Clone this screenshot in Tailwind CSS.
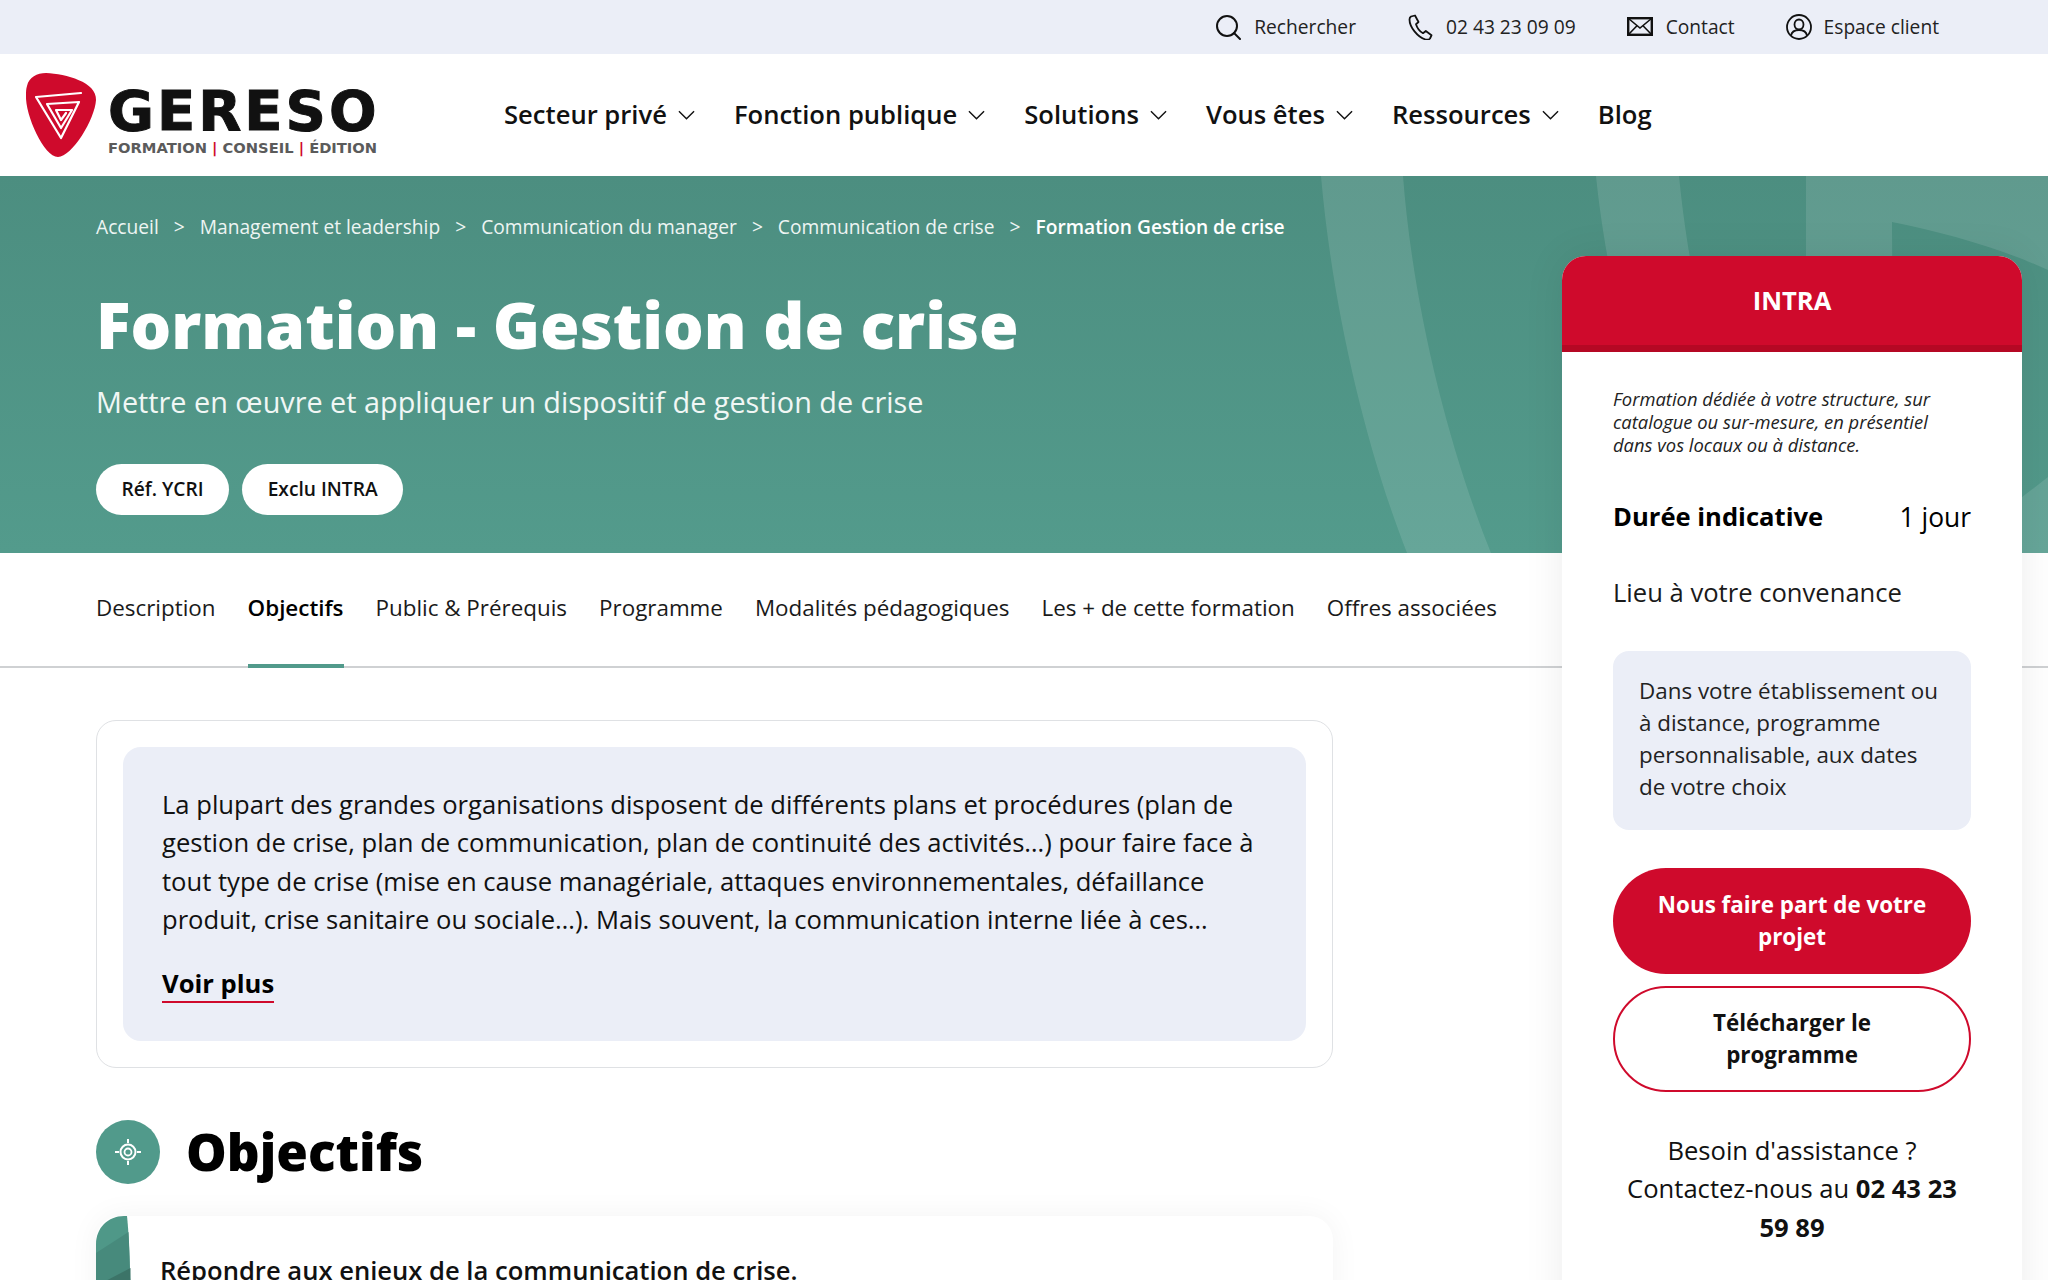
<!DOCTYPE html>
<html lang="fr">
<head>
  <meta charset="UTF-8" />
  <meta name="viewport" content="width=device-width, initial-scale=1.0" />
  <title>Formation - Gestion de crise | GERESO</title>
  <script src="https://cdn.jsdelivr.net/npm/@tailwindcss/browser@4"></script>
</head>
<body class="bg-white text-black font-['Open_Sans',sans-serif]">
  <div class="relative h-[1280px] overflow-hidden">

    <!-- top bar -->
    <div class="h-[54px] bg-[#ebeef7] flex items-center justify-end pr-[109px] gap-[51px] text-[19.2px] text-[#222]">
      <a class="flex items-center gap-[13px] mr-[1px]">
        <svg class="w-[26px] h-[26px]" viewBox="0 0 26 26" fill="none" stroke="#111" stroke-width="2" stroke-linecap="round"><circle cx="12" cy="12" r="10"/><path d="M19 19l6 6"/></svg>
        Rechercher
      </a>
      <a class="flex items-center gap-[12px]">
        <svg class="w-[26px] h-[26px]" viewBox="0 0 26 26" fill="none" stroke="#111" stroke-width="1.8" stroke-linejoin="round"><path d="M3 2.5l4-1 3.500 6.500-2.500 2.200c1.200 4 3.500 7 7 9l2.800-2.200 5.700 4.300-1.500 3.200c-.8 1-2.500 1.500-4.500 1C9.500 23 1.500 13 1.500 5.500c0-1.200.6-2.400 1.500-3z"/></svg>
        02 43 23 09 09
      </a>
      <a class="flex items-center gap-[13px]">
        <svg class="w-[26px] h-[19px]" viewBox="0 0 26 19" fill="none" stroke="#111" stroke-width="2.400"><rect x="1.200" y="1.200" width="23.600" height="16.600"/><path d="M1.500 1.500L13 11 24.500 1.500M1.500 17.500l8.500-8.800M24.500 17.500L16 8.700" stroke-width="1.600"/></svg>
        Contact
      </a>
      <a class="flex items-center gap-[12px]">
        <svg class="w-[26px] h-[26px]" viewBox="0 0 26 26" fill="none" stroke="#111" stroke-width="1.800"><circle cx="13" cy="13" r="12"/><ellipse cx="13" cy="10.500" rx="4.500" ry="5"/><path d="M5 21.500c.8-4 3.500-5.500 8-5.500s7.200 1.500 8 5.500"/></svg>
        Espace client
      </a>
    </div>

    <!-- nav -->
    <div class="h-[122px] flex items-center">
      <a class="w-[504px] pl-[24px] flex items-center gap-[11px] shrink-0">
        <svg class="w-[73px] h-[84px] shrink-0" viewBox="0 0 73 84">
          <path fill="#cf0a2c" d="M3 13C5 4 13 0 22 0c20 1 51 9 50 27C71 46 48 84 34 84 20 84 1 42 2 22c0-3 0-6 1-9z"/>
          <path fill="none" stroke="#fff" stroke-width="2.200" stroke-linejoin="round" stroke-linecap="round" d="M57 20L12 24l25 41 18-36-32 2 14 24 11-18H32l5 10 5-7"/>
        </svg>
        <div class="w-[270px] pt-[12px]">
          <div class="font-['DejaVu_Sans',sans-serif] font-bold text-[56px] leading-[51px] tracking-[3px] [-webkit-text-stroke:1px_#111] text-[#111] whitespace-nowrap">GERESO</div>
          <div class="mt-[3px] font-['DejaVu_Sans',sans-serif] font-bold text-[14.7px] leading-[18px] text-[#5b5b5b] whitespace-nowrap">FORMATION <span class="text-[#cf0a2c]">|</span> CONSEIL <span class="text-[#cf0a2c]">|</span> ÉDITION</div>
        </div>
      </a>
      <nav class="flex items-center gap-[39px] text-[25.6px] font-semibold text-[#111]">
        <a class="flex items-center gap-[11px]">Secteur privé <svg class="w-[17px] h-[10px]" viewBox="0 0 18 10" fill="none" stroke="#111" stroke-width="1.500"><path d="M1 1l8 8 8-8"/></svg></a>
        <a class="flex items-center gap-[11px]">Fonction publique <svg class="w-[17px] h-[10px]" viewBox="0 0 18 10" fill="none" stroke="#111" stroke-width="1.500"><path d="M1 1l8 8 8-8"/></svg></a>
        <a class="flex items-center gap-[11px]">Solutions <svg class="w-[17px] h-[10px]" viewBox="0 0 18 10" fill="none" stroke="#111" stroke-width="1.500"><path d="M1 1l8 8 8-8"/></svg></a>
        <a class="flex items-center gap-[11px]">Vous êtes <svg class="w-[17px] h-[10px]" viewBox="0 0 18 10" fill="none" stroke="#111" stroke-width="1.500"><path d="M1 1l8 8 8-8"/></svg></a>
        <a class="flex items-center gap-[11px]">Ressources <svg class="w-[17px] h-[10px]" viewBox="0 0 18 10" fill="none" stroke="#111" stroke-width="1.500"><path d="M1 1l8 8 8-8"/></svg></a>
        <a>Blog</a>
      </nav>
    </div>

    <!-- hero -->
    <section class="relative h-[377px] overflow-hidden bg-gradient-to-b from-[#4c8e80] to-[#539b8c] pl-[96px] text-white">
      <svg class="absolute inset-0 w-full h-full" viewBox="0 0 2048 377" preserveAspectRatio="none">
        <g fill="#fff" fill-opacity=".115">
          <path d="M1321 0h82c10 130 45 270 88 377h-84c-43-110-75-250-86-377z"/>
          <path d="M1596 0h83c5 50 14 110 30 170h-84c-13-60-24-120-29-170z"/>
          <path fill-rule="evenodd" d="M1806 0h242v377h-242zM1892 46c60 12 112 28 156 48v207l-98 76h-56z"/>
        </g>
      </svg>
      <div class="relative">
        <div class="pt-[37px] flex items-center text-[19.2px] leading-[28px] text-[#eef5f3] whitespace-nowrap">
          <a>Accueil</a><span class="mx-[15px]">&gt;</span>
          <a>Management et leadership</a><span class="mx-[15px]">&gt;</span>
          <a>Communication du manager</a><span class="mx-[15px]">&gt;</span>
          <a>Communication de crise</a><span class="mx-[15px]">&gt;</span>
          <a class="font-semibold text-white">Formation Gestion de crise</a>
        </div>
        <h1 class="mt-[44px] text-[64px] leading-[80px] font-extrabold">Formation - Gestion de crise</h1>
        <p class="mt-[17px] text-[28.8px] leading-[40px] text-[#f1f7f5]">Mettre en œuvre et appliquer un dispositif de gestion de crise</p>
        <div class="mt-[42px] flex gap-[13px] text-[19.2px] font-semibold text-[#111]">
          <span class="h-[51px] px-[25.5px] flex items-center bg-white rounded-full">Réf. YCRI</span>
          <span class="h-[51px] px-[25.5px] flex items-center bg-white rounded-full">Exclu INTRA</span>
        </div>
      </div>
    </section>

    <!-- tabs -->
    <div class="h-[115px] border-b-2 border-[#cfd1d3] pl-[96px] flex items-stretch gap-[32px] text-[22.4px] text-[#1a1a1a]">
      <a class="flex items-center pb-[4px]">Description</a>
      <a class="flex items-center pb-[4px] font-semibold text-black relative">Objectifs<span class="absolute left-0 right-0 -bottom-[2px] h-[4px] bg-[#519a8b]"></span></a>
      <a class="flex items-center pb-[4px]">Public &amp; Prérequis</a>
      <a class="flex items-center pb-[4px]">Programme</a>
      <a class="flex items-center pb-[4px]">Modalités pédagogiques</a>
      <a class="flex items-center pb-[4px]">Les + de cette formation</a>
      <a class="flex items-center pb-[4px]">Offres associées</a>
    </div>

    <!-- main column -->
    <main class="ml-[96px] w-[1237px] pt-[52px]">
      <div class="border border-[#dfe1e4] rounded-[20px] p-[26px]">
        <div class="bg-[#ebeef7] rounded-[18px] pl-[39px] pr-[36px] pt-[39px] pb-[38px] h-[294px]">
          <p class="text-[25.6px] leading-[38.400px] text-[#111]">La plupart des grandes organisations disposent de différents plans et procédures (plan de gestion de crise, plan de communication, plan de continuité des activités…) pour faire face à tout type de crise (mise en cause managériale, attaques environnementales, défaillance produit, crise sanitaire ou sociale…). Mais souvent, la communication interne liée à ces…</p>
          <a class="inline-block mt-[27px] text-[25.6px] leading-[34px] font-bold border-b-2 border-[#cf0a2c]">Voir plus</a>
        </div>
      </div>

      <div class="mt-[52px] flex items-center gap-[26px]">
        <span class="w-[64px] h-[64px] rounded-full bg-[#519a8b] flex items-center justify-center">
          <svg class="w-[26px] h-[26px]" viewBox="0 0 26 26" fill="none" stroke="#fff" stroke-width="2"><circle cx="13" cy="13" r="7.500"/><circle cx="13" cy="13" r="3.500" stroke-width="1.800"/><path d="M13 0v4M13 22v4M0 13h4M22 13h4"/></svg>
        </span>
        <h2 class="text-[51.2px] leading-[62px] font-extrabold pb-[2px]">Objectifs</h2>
      </div>

      <div class="mt-[32px] h-[200px] flex rounded-[24px] shadow-[0_0_30px_rgba(0,0,0,.05)]">
        <svg class="w-[35px] h-[200px] shrink-0" viewBox="0 0 35 200">
          <path fill="#4f9888" d="M0 28C0 12 12 0 28 0h3c2 20 4 50 4 200H0z"/>
          <path fill="#478a7c" d="M0 37L32.500 16c1 20 2.500 40 2.500 184H0z"/>
          <path fill="#3c7468" d="M0 70L34.500 52 35 200H0z"/>
        </svg>
        <p class="pl-[29px] pt-[38px] text-[25.6px] leading-[34px] font-semibold text-[#111]">Répondre aux enjeux de la communication de crise.</p>
      </div>
    </main>

    <!-- sidebar, overlaps the hero and the page -->
    <aside class="absolute left-[1562px] top-[256px] w-[460px] h-[1100px] bg-white rounded-t-[24px] shadow-[0_0_40px_rgba(0,0,0,.08)]">
      <div class="h-[96px] pt-[2px] bg-[#cf0a2c] border-b-[7px] border-[#b50824] rounded-t-[24px] flex items-center justify-center text-[25.6px] font-bold text-white">INTRA</div>
      <div class="px-[51px] pt-[35px]">
        <p class="text-[18.4px] leading-[23px] italic text-[#222]">Formation dédiée à votre structure, sur catalogue ou sur-mesure, en présentiel dans vos locaux ou à distance.</p>
        <div class="mt-[41px] flex justify-between items-center text-[26.4px] leading-[40px]">
          <span class="font-bold text-[25.6px]">Durée indicative</span><span>1 jour</span>
        </div>
        <p class="mt-[36px] text-[25.6px] leading-[40px] text-[#1a1a1a]">Lieu à votre convenance</p>
        <div class="mt-[38px] h-[179px] bg-[#ebeef7] rounded-[16px] px-[26px] py-[24px] text-[22.4px] leading-[32px] text-[#222]">Dans votre établissement ou à distance, programme personnalisable, aux dates de votre choix</div>
        <a class="mt-[38px] h-[106px] px-[26px] flex items-center justify-center text-center rounded-full bg-[#cf0a2c] text-white text-[22.4px] leading-[32px] font-bold">Nous faire part de votre projet</a>
        <a class="mt-[12px] h-[106px] px-[60px] flex items-center justify-center text-center rounded-full border-2 border-[#cf0a2c] text-[22.4px] leading-[32px] font-bold text-[#111]">Télécharger le programme</a>
        <p class="mt-[40px] text-center text-[25.6px] leading-[38.400px] text-[#111]">Besoin d'assistance ?<br>Contactez-nous au <b>02 43 23 59 89</b></p>
      </div>
    </aside>
  </div>
</body>
</html>
